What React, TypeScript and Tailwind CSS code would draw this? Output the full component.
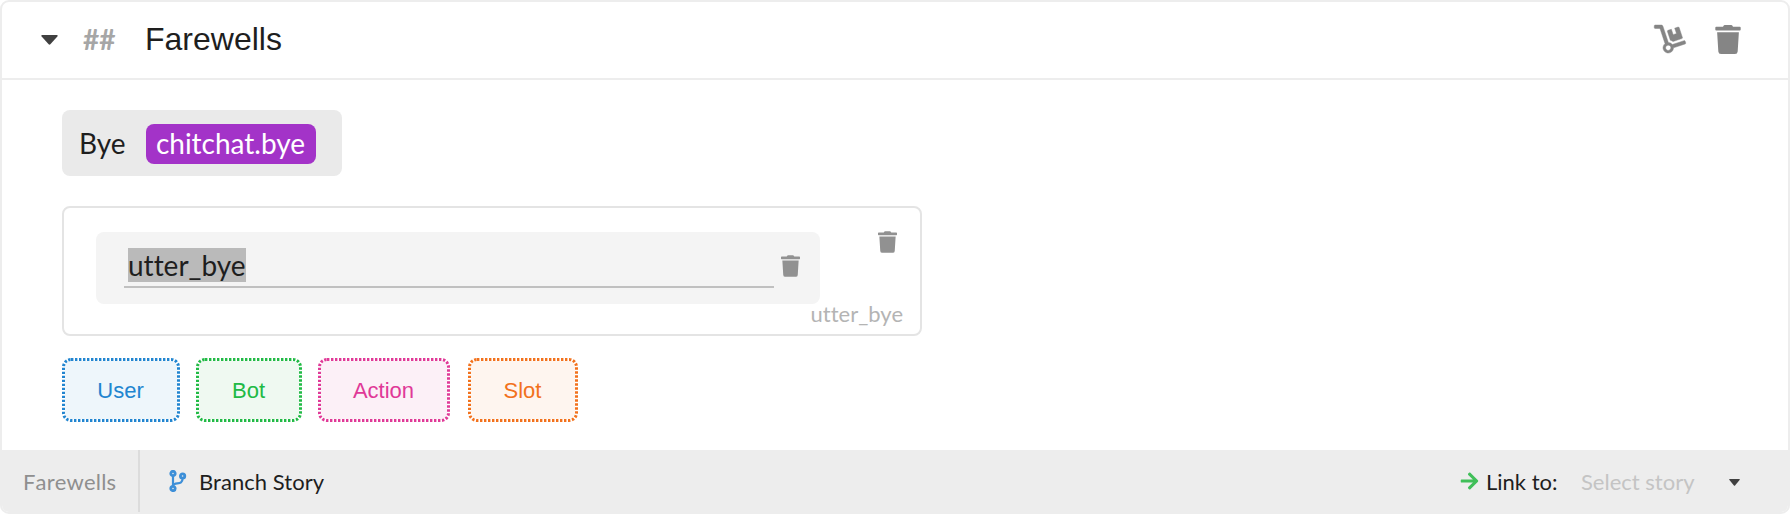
import React from "react";
import { FaTrash, FaDolly, FaArrowRight } from "react-icons/fa";

type Tone = { label: string; box: string; stroke: string };

const tones: Tone[] = [
  { label: "User", box: "w-[118px] text-[#2185d0] bg-[#eef6fb]", stroke: "#2185d0" },
  { label: "Bot", box: "w-[106px] text-[#21ba45] bg-[#eff9f1]", stroke: "#21ba45" },
  { label: "Action", box: "w-[132px] text-[#e03997] bg-[#fcf0f7]", stroke: "#e03997" },
  { label: "Slot", box: "ml-[2px] w-[110px] text-[#f2711c] bg-[#fef5ef]", stroke: "#f2711c" },
];

function AddButton({ label, box, stroke }: Tone) {
  return (
    <button className={`relative h-16 rounded-[9px] pr-px pt-[2px] font-['Liberation_Sans',sans-serif] text-[22px] leading-none ${box}`}>
      <svg className="absolute inset-0 h-full w-full overflow-visible">
        <rect x="1.5" y="1.5" rx="7.5" className="h-[61px] w-[calc(100%-3px)]" fill="none" stroke="#fff" strokeWidth="3" />
        <rect x="1.5" y="1.5" rx="7.5" className="h-[61px] w-[calc(100%-3px)]" fill="none" stroke={stroke} strokeWidth="3" strokeDasharray="2.4 1.6" />
      </svg>
      {label}
    </button>
  );
}

function Caret({ className }: { className: string }) {
  return (
    <svg viewBox="0 0 16 10" preserveAspectRatio="none" className={className} fill="currentColor">
      <path d="M1 0H15Q16.2 .4 15.4 1.4L8.8 9.3Q8 10.2 7.2 9.3L.6 1.4Q-.2.4 1 0Z" />
    </svg>
  );
}

function BranchIcon({ className }: { className: string }) {
  return (
    <svg viewBox="0 0 18 22" className={className} fill="none" stroke="currentColor" strokeWidth="2.8">
      <circle cx="4" cy="3.5" r="2.2" />
      <circle cx="4" cy="18.5" r="2.2" />
      <circle cx="13.6" cy="6" r="2.2" />
      <path d="M4 5.8V16.2M13.6 8.3C13.6 13.8 10 13 6.6 13.6Q4.6 14 4 15.6" strokeWidth="2.2" />
    </svg>
  );
}

export default function App() {
  return (
    <div className="flex h-[514px] w-full flex-col overflow-hidden rounded-[9px] border-2 border-[#ededed] bg-white font-['Lato',sans-serif] text-[#1e1e1e] [font-variant-ligatures:none]">
      <header className="flex h-[78px] shrink-0 items-center border-b-2 border-[#ededed] pb-[2px] pl-[39px] pr-[47px]">
        <Caret className="mt-[2px] h-[10px] w-[17px] text-[#404040]" />
        <span className="ml-[25px] w-[62px] text-[28px] font-bold leading-none text-[#a6a6a6]">##</span>
        <h1 className="font-['Liberation_Sans',sans-serif] text-[32px] leading-none">Farewells</h1>
        <FaDolly className="ml-auto h-7 w-8 overflow-visible stroke-current stroke-[8px] text-[#858585]" />
        <FaTrash className="ml-[29px] h-[29px] w-[26px] text-[#858585]" />
      </header>

      <main className="flex flex-1 flex-col items-start pl-[60px] pt-[30px]">
        <div className="flex h-[66px] w-[280px] items-center rounded-lg bg-[#eaeaea] pl-[17px] pt-[2px] text-[28px] leading-none">
          <span className="w-[67px] pb-[2px]">Bye</span>
          <span className="flex h-10 w-[170px] items-center justify-center rounded-lg bg-[#a333c8] pb-[2px] pr-px text-white">chitchat.bye</span>
        </div>

        <section className="mt-[30px] flex h-[130px] w-[860px] rounded-lg border-2 border-[#e4e4e4] pl-8 pt-6">
          <div className="flex h-[72px] w-[724px] rounded-lg bg-[#f4f4f4] pl-7 pt-4">
            <div className="h-10 w-[650px] border-b-2 border-[#c0c0c0] pl-1 text-[28px] leading-[34px]">
              <span className="inline-block h-[34px] w-[118px] whitespace-nowrap bg-[#bababa]">utter_bye</span>
            </div>
            <FaTrash className="ml-[7px] mt-[7px] h-[22px] w-[19px] text-[#919191]" />
          </div>
          <div className="flex flex-1 flex-col items-end pr-[17px]">
            <FaTrash className="mr-[6px] mt-[-1px] h-[22px] w-[19px] text-[#919191]" />
            <span className="-ml-8 mt-[48px] text-[22px] leading-[26px] text-[#b4b4b4]">utter_bye</span>
          </div>
        </section>

        <div className="mt-[22px] flex gap-4">
          {tones.map((tone) => (
            <AddButton key={tone.label} {...tone} />
          ))}
        </div>
      </main>

      <footer className="flex h-[62px] shrink-0 items-center bg-[#ededed] text-[22px] leading-none">
        <div className="flex h-full w-[138px] items-center border-r-2 border-[#dcdcdc] pl-[21px] pt-[2px] tracking-[0.15px] text-[#8f8f8f] [font-kerning:none]">Farewells</div>
        <BranchIcon className="ml-[29px] h-[22px] w-[18px] text-[#3d8fd8]" />
        <span className="ml-3 pt-[2px] tracking-[0.05px]">Branch Story</span>
        <FaArrowRight className="ml-auto h-5 w-[19px] text-[#40bf59]" />
        <span className="ml-[7px] w-[95px] pt-[2px]">Link to:</span>
        <span className="w-[148px] pt-[2px] text-[#c4c4c4]">Select story</span>
        <Caret className="mr-[48px] mt-[3px] h-[7px] w-[11px] text-[#404040]" />
      </footer>
    </div>
  );
}
